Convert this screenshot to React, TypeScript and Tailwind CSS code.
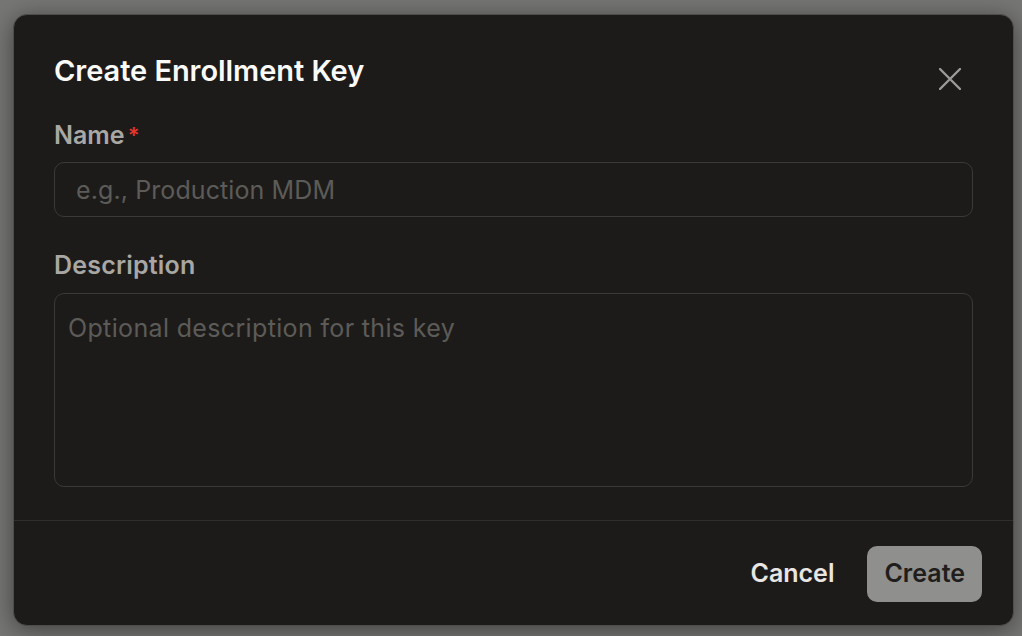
import React from "react";

export default function App() {
  return (
    <div
      className="w-[1022px] h-[636px] bg-[#767674] pt-[14px] pl-[13px] overflow-hidden"
      style={{ fontFamily: "Inter, 'Noto Sans', sans-serif" }}
    >
      <div className="relative w-[1001px] h-[612px] rounded-[14px] border border-[#4e4d4b] bg-[#1c1b1a] shadow-[0_4px_24px_rgba(0,0,0,0.45)] flex flex-col">
        <button className="absolute left-[924px] top-[52px] w-[24px] h-[24px] flex items-center justify-center text-[#9c9a96]">
          <svg width="22" height="22" viewBox="0 0 22 22" fill="none" stroke="currentColor" strokeWidth="2.4" strokeLinecap="round">
            <path d="M1 1L21 21M21 1L1 21" />
          </svg>
        </button>
        <div className="px-[40px] pt-[38px] flex flex-col">
          <h2 className="text-[29px] leading-[36px] font-semibold text-[#fafaf9] tracking-[-0.05px]">
            Create Enrollment Key
          </h2>
          <label className="mt-[30px] text-[25px] leading-[32px] font-semibold text-[#a9a7a3] flex">
            Name<span className="text-[#e5342a] ml-[3px] text-[22px]">*</span>
          </label>
          <div className="mt-[11px] h-[55px] rounded-[10px] border border-[#3a3937] flex items-center pl-[21px]">
            <span className="text-[25px] leading-[32px] text-[#5d5b58] tracking-[0.1px]">e.g., Production MDM</span>
          </div>
          <label className="mt-[32px] text-[25px] leading-[32px] font-semibold text-[#a9a7a3] tracking-[0.2px]">
            Description
          </label>
          <div className="mt-[12px] h-[194px] rounded-[10px] border border-[#3a3937] pl-[13px] pt-[18px]">
            <span className="text-[25px] leading-[32px] text-[#5d5b58] tracking-[0.35px]">Optional description for this key</span>
          </div>
        </div>
        <div className="mt-[33px] h-px bg-[#2f2e2c]" />
        <div className="flex justify-end items-center gap-[19px] pr-[31px] mt-[25px]">
          <button className="h-[56px] px-[14px] text-[25px] font-semibold text-[#e8e6e3] rounded-[10px]">
            Cancel
          </button>
          <button className="h-[56px] px-[17px] text-[25px] font-semibold text-[#1f1e1d] bg-[#8f8f8d] rounded-[10px]">
            Create
          </button>
        </div>
      </div>
    </div>
  );
}
